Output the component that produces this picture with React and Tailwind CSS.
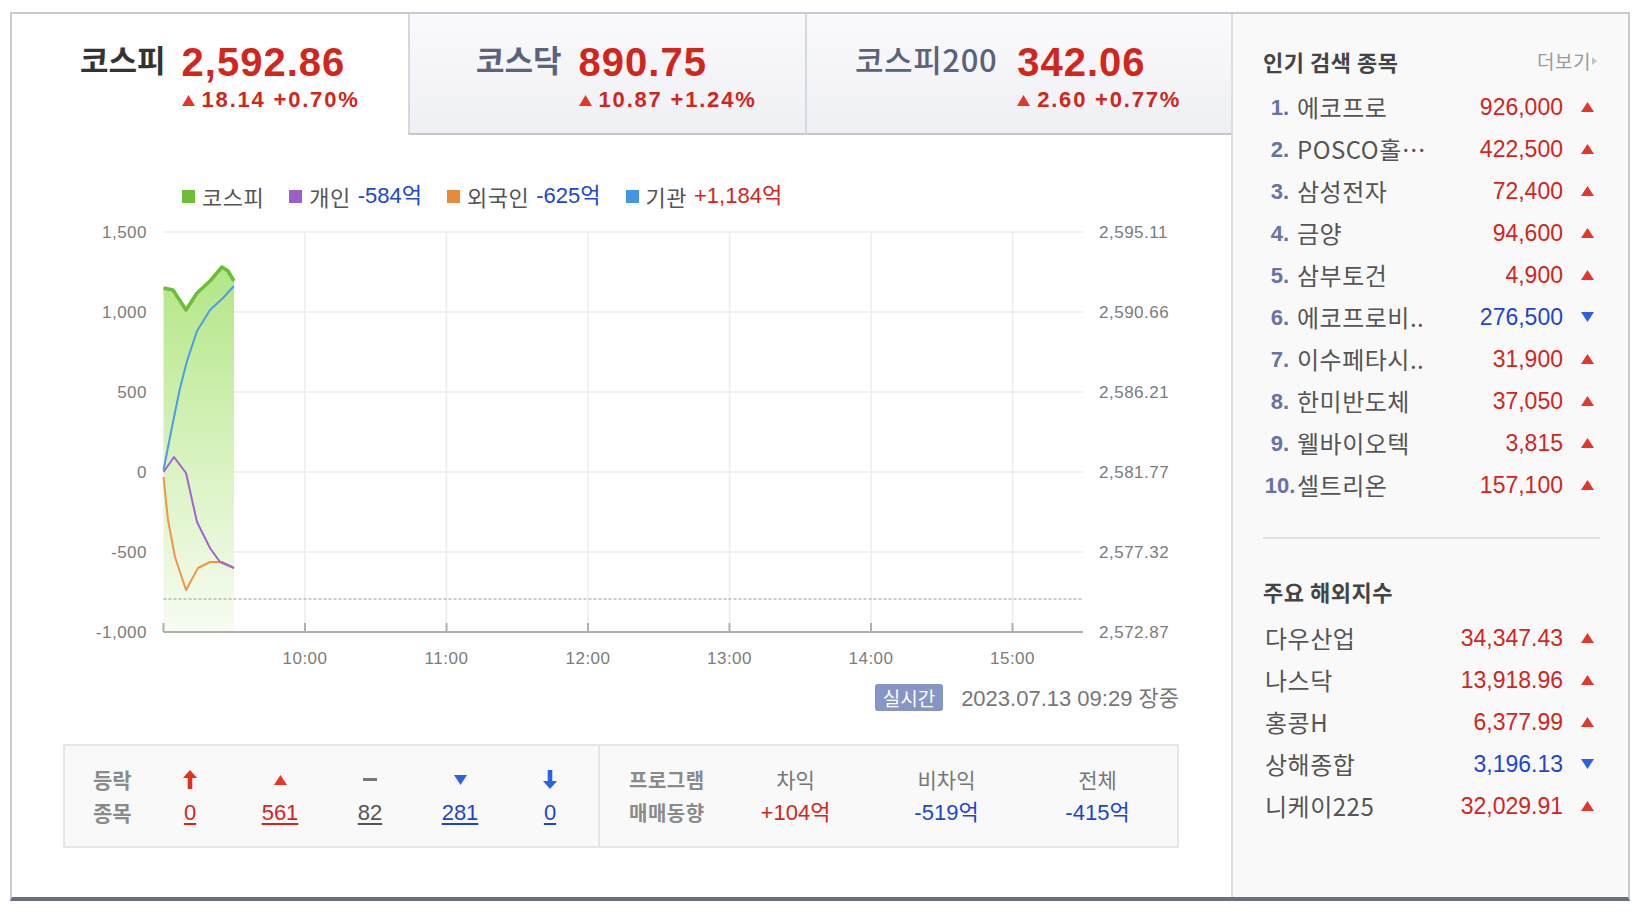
import React from 'react';

const SANS = "font-['Liberation_Sans','Noto_Sans_CJK_KR',sans-serif]";
const KR = "font-['Noto_Sans_CJK_KR','Liberation_Sans',sans-serif]";

const RED = 'text-[#d2261c]';
const BLUE = 'text-[#1c46cf]';

const tabs = [
  { label: '코스피', value: '2,592.86', change: '18.14 +0.70%', active: true, pl: 'pl-[68px]', labelCls: 'font-bold text-[#333]', gap: 'ml-[16px]' },
  { label: '코스닥', value: '890.75', change: '10.87 +1.24%', pl: 'pl-[66px]', labelCls: 'font-bold text-[#5b627a]', gap: 'ml-[17px]' },
  { label: '코스피200', value: '342.06', change: '2.60 +0.77%', pl: 'pl-[48px]', labelCls: 'font-medium text-[#5b627a] tracking-[0.6px]', gap: 'ml-[20px]' },
];

const popular = [
  ['에코프로', '926,000', 'up'],
  ['POSCO홀…', '422,500', 'up'],
  ['삼성전자', '72,400', 'up'],
  ['금양', '94,600', 'up'],
  ['삼부토건', '4,900', 'up'],
  ['에코프로비..', '276,500', 'down'],
  ['이수페타시..', '31,900', 'up'],
  ['한미반도체', '37,050', 'up'],
  ['웰바이오텍', '3,815', 'up'],
  ['셀트리온', '157,100', 'up'],
];

const overseas = [
  ['다우산업', '34,347.43', 'up'],
  ['나스닥', '13,918.96', 'up'],
  ['홍콩H', '6,377.99', 'up'],
  ['상해종합', '3,196.13', 'down'],
  ['니케이225', '32,029.91', 'up'],
];

// chart geometry, in page pixels (the svg viewBox starts at the page origin of the chart block)
const GRID_Y = [232, 312, 392, 472, 552, 632];
const LEFT_LABELS = ['1,500', '1,000', '500', '0', '-500', '-1,000'];
const RIGHT_LABELS = ['2,595.11', '2,590.66', '2,586.21', '2,581.77', '2,577.32', '2,572.87'];
const HOURS = ['10:00', '11:00', '12:00', '13:00', '14:00', '15:00'];
const X0 = 163.5;
const HOUR = 141.5;
const X1 = 1083;

const kospi = [[163.5, 288], [173, 290], [186, 310], [197, 293], [210, 281], [222, 267], [228, 271], [234, 281]];
const inst = [[163.5, 470], [172, 427], [180, 388], [187, 361], [197, 331], [210, 310], [223, 298], [234, 286]];
const indiv = [[163.5, 472], [174, 457], [186, 473], [197, 522], [210, 548], [220, 562], [234, 568]];
const foreign = [[163.5, 477], [168, 520], [175, 557], [186, 590], [198, 568], [210, 562], [222, 562], [234, 568]];

const pts = (arr) => arr.map(([x, y]) => `${x},${y}`).join(' ');

function Tri({ down, w = 13, h = 10, className = '' }) {
  return (
    <svg width={w} height={h} viewBox={`0 0 ${w} ${h}`} className={className}>
      {down ? (
        <polygon points={`0,0 ${w},0 ${w / 2},${h}`} fill="#2d62e0" />
      ) : (
        <polygon points={`${w / 2},0 ${w},${h} 0,${h}`} fill="#e3372b" />
      )}
    </svg>
  );
}

function IndexTab({ tab }) {
  const base = tab.active
    ? 'w-[396px] bg-white'
    : 'bg-gradient-to-b from-[#fafafc] to-[#eff0f4] border-l-2 border-l-[#d5d8de] border-b-2 border-b-[#c3c6cd]';
  return (
    <div className={`${base} ${tab.label === '코스닥' ? 'w-[397px]' : ''} ${tab.label === '코스피200' ? 'flex-1' : ''} h-full ${tab.pl} pt-[28px]`}>
      <div className="flex items-start">
        <span className={`${KR} ${tab.labelCls} text-[31px] leading-none mt-[1px]`}>{tab.label}</span>
        <div className={tab.gap}>
          <div className={`text-[40px] leading-none font-bold tracking-[1px] ${RED}`}>{tab.value}</div>
          <div className={`mt-[7px] flex items-center text-[22px] leading-none font-bold tracking-[1.8px] ${RED}`}>
            <Tri w={13} h={11} className="mr-[7px]" />
            <span>{tab.change}</span>
          </div>
        </div>
      </div>
    </div>
  );
}

function Chart() {
  return (
    <svg width="1219" height="466" viewBox="12 208 1219 466" className="block">
      <defs>
        <linearGradient id="kospiFill" x1="0" y1="266" x2="0" y2="632" gradientUnits="userSpaceOnUse">
          <stop offset="0" stopColor="#b3e685" />
          <stop offset="0.5" stopColor="#d6f2bd" />
          <stop offset="1" stopColor="#f7fcf2" />
        </linearGradient>
      </defs>

      {GRID_Y.slice(0, 5).map((y) => (
        <line key={y} x1={X0} x2={X1} y1={y} y2={y} stroke="#ececec" strokeWidth="1.5" />
      ))}
      {HOURS.map((h, i) => (
        <line key={h} x1={X0 + HOUR * (i + 1)} x2={X0 + HOUR * (i + 1)} y1="232" y2="632" stroke="#ececec" strokeWidth="1.5" />
      ))}

      <polygon points={`${pts(kospi)} 234,632 163.5,632`} fill="url(#kospiFill)" />

      <line x1={X0} x2={X1} y1="599" y2="599" stroke="#9a9a9a" strokeWidth="1" strokeDasharray="3 2" />

      <line x1={X0} x2={X1} y1="632" y2="632" stroke="#b0b0b0" strokeWidth="2" />
      {[0, 1, 2, 3, 4, 5, 6].map((i) => (
        <line key={i} x1={X0 + HOUR * i} x2={X0 + HOUR * i} y1="623" y2="632" stroke="#b0b0b0" strokeWidth="2" />
      ))}

      <polyline points={pts(foreign)} fill="none" stroke="#ee9844" strokeWidth="2" strokeLinejoin="round" />
      <polyline points={pts(indiv)} fill="none" stroke="#a066cc" strokeWidth="2" strokeLinejoin="round" />
      <polyline points={pts(inst)} fill="none" stroke="#4b9ee2" strokeWidth="2" strokeLinejoin="round" />
      <polyline points={pts(kospi)} fill="none" stroke="#6cbd38" strokeWidth="3.5" strokeLinejoin="round" />

      <g fill="#7c7c7c" fontSize="17" letterSpacing="0.5" fontFamily="'Liberation Sans', sans-serif">
        {LEFT_LABELS.map((t, i) => (
          <text key={t} x="147" y={GRID_Y[i] + 6} textAnchor="end">{t}</text>
        ))}
        {RIGHT_LABELS.map((t, i) => (
          <text key={t} x="1099" y={GRID_Y[i] + 6}>{t}</text>
        ))}
        {HOURS.map((t, i) => (
          <text key={t} x={X0 + HOUR * (i + 1)} y="664" textAnchor="middle">{t}</text>
        ))}
      </g>
    </svg>
  );
}

function Legend() {
  const items = [
    { color: 'bg-[#6cbd38]', label: '코스피' },
    { color: 'bg-[#9a60c8]', label: '개인', value: '-584억', cls: BLUE },
    { color: 'bg-[#e98a3a]', label: '외국인', value: '-625억', cls: BLUE },
    { color: 'bg-[#4595e6]', label: '기관', value: '+1,184억', cls: RED },
  ];
  return (
    <div className="mt-[49px] h-[24px] pl-[170px] flex items-center gap-[25px] text-[22px] leading-none">
      {items.map((it) => (
        <div key={it.label} className="flex items-center">
          <span className={`w-[13px] h-[13px] ${it.color}`} />
          <span className={`${KR} ml-[7px] text-[#555] tracking-[0.5px]`}>{it.label}</span>
          {it.value && <span className={`ml-[7px] ${it.cls}`}>{it.value}</span>}
        </div>
      ))}
    </div>
  );
}

function UpArrow() {
  return (
    <svg width="14" height="19" viewBox="0 0 14 19">
      <path d="M7 0 L14 8 L9.3 8 L9.3 19 L4.7 19 L4.7 8 L0 8 Z" fill="#e0311f" />
    </svg>
  );
}

function DownArrow() {
  return (
    <svg width="14" height="19" viewBox="0 0 14 19">
      <path d="M4.7 0 L9.3 0 L9.3 11 L14 11 L7 19 L0 11 L4.7 11 Z" fill="#2d62e0" />
    </svg>
  );
}

function Breadth() {
  const cols = [
    { icon: <UpArrow />, n: '0', cls: 'text-[#d2261c] decoration-[#d2261c]' },
    { icon: <Tri w={13} h={10} />, n: '561', cls: 'text-[#d2261c] decoration-[#d2261c]' },
    { icon: <span className="block w-[14px] h-[3px] bg-[#777]" />, n: '82', cls: 'text-[#555] decoration-[#555]' },
    { icon: <Tri down w={13} h={10} />, n: '281', cls: 'text-[#1c46cf] decoration-[#1c46cf]' },
    { icon: <DownArrow />, n: '0', cls: 'text-[#1c46cf] decoration-[#1c46cf]' },
  ];
  const program = [
    { head: '차익', v: '+104억', cls: RED },
    { head: '비차익', v: '-519억', cls: BLUE },
    { head: '전체', v: '-415억', cls: BLUE },
  ];
  return (
    <div className="mt-[33px] ml-[51px] w-[1116px] h-[104px] border-2 border-[#e6e6e6] bg-[#f9f9f9] flex">
      <div className="w-[535px] border-r-2 border-[#e6e6e6] pl-[28px] flex flex-col justify-center">
        <div className="flex h-[33px] items-center">
          <span className={`${KR} w-[52px] text-[21px] font-bold text-[#8a8a8a]`}>등락</span>
          {cols.map((c, i) => (
            <div key={i} className="w-[90px] flex justify-center">{c.icon}</div>
          ))}
        </div>
        <div className="flex h-[33px] items-center">
          <span className={`${KR} w-[52px] text-[21px] font-bold text-[#8a8a8a]`}>종목</span>
          {cols.map((c, i) => (
            <div key={i} className="w-[90px] text-center">
              <span className={`text-[22px] underline underline-offset-[3px] ${c.cls}`}>{c.n}</span>
            </div>
          ))}
        </div>
      </div>
      <div className="flex-1 pl-[29px] flex flex-col justify-center">
        <div className="flex h-[33px] items-center">
          <span className={`${KR} w-[91px] text-[20px] font-bold text-[#8a8a8a] tracking-[0.5px]`}>프로그램</span>
          {program.map((p) => (
            <div key={p.head} className={`${KR} w-[151px] text-center text-[21px] text-[#777]`}>{p.head}</div>
          ))}
        </div>
        <div className="flex h-[33px] items-center">
          <span className={`${KR} w-[91px] text-[20px] font-bold text-[#8a8a8a] tracking-[0.5px]`}>매매동향</span>
          {program.map((p) => (
            <div key={p.head} className={`w-[151px] text-center text-[22px] ${p.cls}`}>{p.v}</div>
          ))}
        </div>
      </div>
    </div>
  );
}

function QuoteRow({ name, price, dir, index }) {
  const color = dir === 'down' ? BLUE : RED;
  return (
    <li className="h-[42px] flex items-center">
      {index ? (
        <span className="w-[34px] text-center text-[22px] font-bold text-[#6673a5]">{index}.</span>
      ) : null}
      <span className={`${KR} flex-1 text-[24px] text-[#555] tracking-[0.5px] ${index ? '' : 'pl-[2px]'}`}>{name}</span>
      <span className={`text-[23px] ${color}`}>{price}</span>
      <Tri down={dir === 'down'} className="ml-[18px]" />
    </li>
  );
}

export default function App() {
  return (
    <div className={`w-[1650px] h-[912px] bg-white pt-[12px] pl-[10px] ${SANS}`}>
      <div className="flex w-[1620px] h-[889px] border-2 border-[#c8cbd1] border-b-4 border-b-[#6b7080]">
        {/* 지수 + 차트 */}
        <main className="w-[1219px] flex flex-col bg-white">
          <div className="h-[121px] flex">
            {tabs.map((t) => (
              <IndexTab key={t.label} tab={t} />
            ))}
          </div>

          <Legend />
          <Chart />

          <div className="mt-[10px] h-[27px] pr-[52px] flex justify-end items-center">
            <span className={`${KR} h-[27px] px-[8px] rounded-[3px] bg-[#8795c4] text-white text-[19px] leading-none flex items-center`}>실시간</span>
            <span className="ml-[18px] text-[22px] text-[#777]">
              2023.07.13 09:29 <span className={KR}>장중</span>
            </span>
          </div>

          <Breadth />
        </main>

        {/* 사이드바 */}
        <aside className="flex-1 bg-[#f9f9f9] border-l-2 border-[#dcdee3] pl-[30px] pr-[34px]">
          <div className="mt-[33px] h-[28px] flex items-center justify-between">
            <h3 className={`${KR} text-[22px] font-bold text-[#444] tracking-[0.5px]`}>인기 검색 종목</h3>
            <span className={`${KR} text-[19px] text-[#9a9a9a] tracking-[0.5px] flex items-center mr-[-3px]`}>
              더보기
              <svg width="5" height="8" viewBox="0 0 5 8" className="ml-[1px]">
                <polygon points="0,0 5,4 0,8" fill="#c4c4c4" />
              </svg>
            </span>
          </div>
          <ul className="mt-[11px]">
            {popular.map(([name, price, dir], i) => (
              <QuoteRow key={name} name={name} price={price} dir={dir} index={i + 1} />
            ))}
          </ul>

          <div className="mt-[31px] h-[2px] bg-[#e1e2e7] mr-[-6px]" />

          <h3 className={`${KR} mt-[38px] h-[28px] flex items-center text-[22px] font-bold text-[#444] tracking-[0.5px]`}>주요 해외지수</h3>
          <ul className="mt-[12px]">
            {overseas.map(([name, price, dir]) => (
              <QuoteRow key={name} name={name} price={price} dir={dir} />
            ))}
          </ul>
        </aside>
      </div>
    </div>
  );
}
